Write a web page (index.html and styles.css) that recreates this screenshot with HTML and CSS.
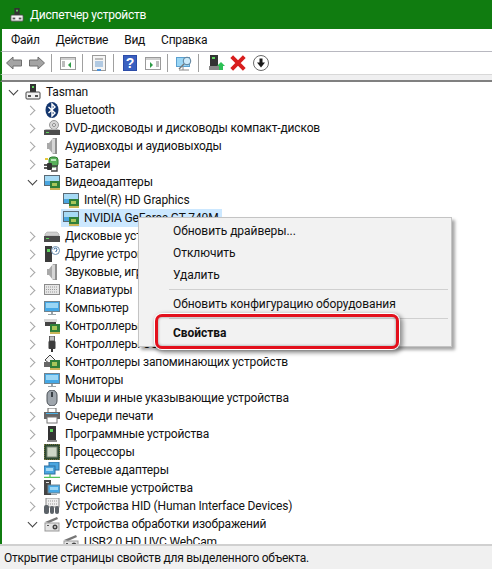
FILE: index.html
```html
<!DOCTYPE html>
<html lang="ru">
<head>
    <meta charset="UTF-8">
    <title>Диспетчер устройств</title>
    <link rel="stylesheet" href="styles.css">
</head>
<body>
    <svg class="defs" width="0" height="0">
        <defs>
            <symbol id="i-device" viewBox="0 0 16 16">
                <rect x="5" y="0" width="6" height="9" fill="#333"/><rect x="7" y="2" width="2" height="2" fill="#5fd35f"/>
                <rect x="1" y="8" width="14" height="7" rx="1" fill="#f2f2f2" stroke="#444"/><rect x="3" y="11" width="3" height="2" fill="#555"/><rect x="10" y="11" width="3" height="2" fill="#555"/>
            </symbol>
            <symbol id="i-bt" viewBox="0 0 16 16">
                <ellipse cx="8" cy="8" rx="6.5" ry="8" fill="#14366e"/>
                <path d="M4.5 5l6.5 6-3 3V2l3 3-6.500 6" fill="none" stroke="#fff" stroke-width="1.400"/>
            </symbol>
            <symbol id="i-dvd" viewBox="0 0 16 16">
                <circle cx="10" cy="5" r="4.500" fill="#d8d8d8" stroke="#999"/><circle cx="10" cy="5" r="1.500" fill="#fff" stroke="#888"/>
                <path d="M0 10l2-1h12l2 1v5H0z" fill="#b5b5b5"/><rect x="0" y="10" width="16" height="5" fill="#4c4c4c"/><rect x="2" y="12" width="3" height="1" fill="#5fd35f"/>
            </symbol>
            <symbol id="i-sound" viewBox="0 0 16 16">
                <path d="M3 5h2l4-5h4v16H9l-4-5H3z" fill="#a9a9a9"/><path d="M8 1h3v14H8z" fill="#d6d6d6"/><path d="M11 0h2v16h-2z" fill="#8f8f8f"/>
            </symbol>
            <symbol id="i-battery" viewBox="0 0 16 16">
                <rect x="5" y="1" width="9" height="10" rx="3" fill="#58b05a" stroke="#2f7a32"/><rect x="7" y="3" width="5" height="2" fill="#bfe8bf"/>
                <path d="M0 9h4M0 12h4" stroke="#222" stroke-width="1.300"/><rect x="3" y="7" width="5" height="7" rx="1" fill="#333"/><path d="M8 10h5v5H7" fill="none" stroke="#444" stroke-width="1.400"/><rect x="1" y="2" width="3" height="2" fill="#e8c93a"/>
            </symbol>
            <symbol id="i-video" viewBox="0 0 16 16">
                <rect x=".5" y="1.500" width="15" height="10" fill="#4aa6e0" stroke="#5a6a75"/><rect x="1" y="2" width="14" height="5" fill="#a6daf5"/>
                <rect x="6" y="7" width="10" height="7" fill="#2f7f3a"/><rect x="8" y="9" width="5" height="3" fill="#a8c65a"/><rect x="6" y="14" width="10" height="2" fill="#c9b458"/>
            </symbol>
            <symbol id="i-disk" viewBox="0 0 16 16">
                <path d="M1 6l2-2h10l2 2v2H1z" fill="#cfcfcf" stroke="#9a9a9a" stroke-width=".500"/><rect x="0" y="8" width="16" height="6" fill="#4a4a4a"/><rect x="2" y="10" width="3" height="1" fill="#5fd35f"/>
            </symbol>
            <symbol id="i-other" viewBox="0 0 16 16">
                <rect x="1" y="0" width="7" height="16" fill="#3a3a3a"/><rect x="3" y="3" width="3" height="3" fill="#5fd35f"/>
                <circle cx="11.500" cy="4.500" r="4" fill="#fff" stroke="#6d8fb0"/><path d="M10 3.500a1.500 1.500 0 1 1 2 1.500v1" fill="none" stroke="#245a94"/>
            </symbol>
            <symbol id="i-keyboard" viewBox="0 0 16 16">
                <rect x=".5" y="2.500" width="15" height="10" fill="#e6e6e6" stroke="#8a8a8a"/>
                <path d="M2 5h12M2 7.500h12M2 10h12" stroke="#9b9b9b" stroke-dasharray="1 1"/>
            </symbol>
            <symbol id="i-monitor" viewBox="0 0 16 16">
                <rect x=".5" y="1.500" width="15" height="10" fill="#45a8e6" stroke="#71848f"/><rect x="2" y="3" width="12" height="5" fill="#9ad6f5"/>
                <path d="M7 12h2v2H7zM4 14h8v1H4z" fill="#9aa3a8"/>
            </symbol>
            <symbol id="i-storage" viewBox="0 0 16 16">
                <rect x="0" y="1" width="13" height="3" fill="#d8d8d8"/><rect x="1" y="4" width="11" height="4" fill="#444"/>
                <rect x="6" y="6" width="10" height="8" fill="#2f7f3a"/><rect x="8" y="8" width="5" height="4" fill="#a8c65a"/><rect x="6" y="14" width="10" height="2" fill="#c9b458"/>
            </symbol>
            <symbol id="i-usb" viewBox="0 0 16 16">
                <rect x="5.500" y="0" width="5" height="5" fill="#bbb" stroke="#444" stroke-width=".800"/><rect x="4.500" y="5" width="7" height="8" rx="1" fill="#3d3d3d"/><rect x="7" y="13" width="2" height="3" fill="#333"/>
            </symbol>
            <symbol id="i-memory" viewBox="0 0 16 16">
                <path d="M1 6l5-5 5 5-5 4z" fill="#f2f2f2" stroke="#444"/><rect x="0" y="8" width="7" height="5" fill="#666"/>
                <rect x="6" y="6" width="10" height="8" fill="#2f7f3a"/><rect x="8" y="8" width="5" height="4" fill="#a8c65a"/><rect x="6" y="14" width="10" height="2" fill="#c9b458"/>
            </symbol>
            <symbol id="i-mouse" viewBox="0 0 16 16">
                <rect x="3" y="0" width="10" height="16" rx="5" fill="#9fa6ad" stroke="#4c5258"/><rect x="7" y="2" width="2" height="5" fill="#3a4046"/>
            </symbol>
            <symbol id="i-printer" viewBox="0 0 16 16">
                <rect x="4" y="0" width="8" height="5" fill="#fff" stroke="#666"/><rect x="0" y="4" width="16" height="7" fill="#666"/><rect x="2" y="5" width="12" height="1" fill="#4db3e8"/>
                <rect x="3" y="9" width="10" height="6" fill="#fff" stroke="#777"/>
            </symbol>
            <symbol id="i-program" viewBox="0 0 16 16">
                <rect x="4" y="0" width="8" height="15" fill="#333"/><rect x="6" y="3" width="3" height="3" fill="#5fd35f"/><rect x="3" y="14" width="10" height="2" fill="#888"/>
            </symbol>
            <symbol id="i-cpu" viewBox="0 0 16 16">
                <rect x="0" y="0" width="16" height="16" fill="#2e4a32" stroke="#b89a4a" stroke-dasharray="1 1"/><rect x="3" y="3" width="10" height="10" fill="#cfd8c8" stroke="#7c8a78"/>
            </symbol>
            <symbol id="i-net" viewBox="0 0 16 16">
                <rect x="5" y="0" width="10" height="8" fill="#4aa6e0" stroke="#2f6f9f"/><rect x="0" y="4" width="11" height="8" fill="#4aa6e0" stroke="#2f6f9f"/><rect x="2" y="6" width="7" height="3" fill="#a6daf5"/>
                <path d="M6 12v3M0 15.500h16" stroke="#56c25a" stroke-width="1.300"/>
            </symbol>
            <symbol id="i-system" viewBox="0 0 16 16">
                <rect x="0" y="0" width="7" height="15" fill="#444"/><rect x="2" y="2" width="3" height="1" fill="#ddd"/>
                <rect x="4" y="5" width="12" height="8" fill="#45a8e6" stroke="#71848f"/><rect x="6" y="7" width="8" height="3" fill="#9ad6f5"/><rect x="7" y="14" width="6" height="1" fill="#9aa3a8"/>
            </symbol>
            <symbol id="i-hid" viewBox="0 0 16 16">
                <rect x="2" y="0" width="13" height="9" fill="#eee" stroke="#8a8a8a"/><path d="M4 3h9M4 6h9" stroke="#999" stroke-dasharray="1 1"/>
                <rect x="0" y="7" width="5" height="9" rx="2" fill="#5c6268"/><rect x="6" y="8" width="4" height="8" rx="2" fill="#5c6268"/><rect x="11" y="8" width="4" height="8" rx="2" fill="#5c6268"/>
            </symbol>
            <symbol id="i-camera" viewBox="0 0 16 16">
                <path d="M1 6L13 1l1 2-9 4z" fill="#777"/><rect x="1" y="7" width="14" height="8" fill="#e4e4e4" stroke="#999"/><circle cx="11" cy="11" r="2.500" fill="#444"/><circle cx="11" cy="11" r="1" fill="#ddd"/><rect x="3" y="9" width="2" height="1" fill="#555"/>
            </symbol>
        </defs>
    </svg>

    <div class="window">
        <header class="titlebar">
            <svg class="title-icon"><use href="#i-device"/></svg>
            <span>Диспетчер устройств</span>
        </header>

        <nav class="menubar">
            <span>Файл</span>
            <span>Действие</span>
            <span>Вид</span>
            <span>Справка</span>
        </nav>

        <div class="toolbar">
            <button class="tool">
                <svg viewBox="0 0 16 14"><path d="M.5 7L7 1v3h8.500v6H7v3z" fill="#a4a4a4" stroke="#6f6f6f"/></svg>
            </button>
            <button class="tool">
                <svg viewBox="0 0 16 14"><path d="M15.500 7L9 1v3H.5v6H9v3z" fill="#a4a4a4" stroke="#6f6f6f"/></svg>
            </button>
            <i class="tool-sep"></i>
            <button class="tool">
                <svg viewBox="0 0 16 14"><rect x=".5" y="1.500" width="15" height="12" fill="#fff" stroke="#9a9a9a"/><rect x="1" y="2" width="14" height="2" fill="#cfcfcf"/><path d="M2 6h3M2 8h3M2 10h3" stroke="#7a7a7a"/><path d="M11 6v6L8 9z" fill="#2e9b46"/></svg>
            </button>
            <i class="tool-sep"></i>
            <button class="tool">
                <svg viewBox="0 0 16 16"><rect x="1.500" y=".5" width="13" height="15" fill="#f4f4f4" stroke="#9a9a9a"/><rect x="4" y="3" width="8" height="2" fill="#bcbcbc"/><path d="M4 7h8M4 9h8M4 11h8" stroke="#6f9fd0"/><rect x="6" y="14" width="4" height="2" fill="#4a90d9"/></svg>
            </button>
            <i class="tool-sep"></i>
            <button class="tool">
                <svg viewBox="0 0 14 16"><rect width="14" height="16" fill="#2c4ca8"/><rect x="1" y="1" width="12" height="14" fill="#3a60c0"/><text class="help-mark" x="7" y="13">?</text></svg>
            </button>
            <button class="tool">
                <svg viewBox="0 0 16 14"><rect x=".5" y="1.500" width="15" height="12" fill="#fff" stroke="#9a9a9a"/><rect x="1" y="2" width="14" height="2" fill="#cfcfcf"/><path d="M11 6h3M11 8h3M11 10h3" stroke="#7a7a7a"/><path d="M5 6v6l3-3z" fill="#2e9b46"/></svg>
            </button>
            <i class="tool-sep"></i>
            <button class="tool">
                <svg viewBox="0 0 16 16"><rect x=".5" y="2.500" width="13" height="9" fill="#9ad6f5" stroke="#5aa0d0"/><path d="M3 15h10M7 12v3" stroke="#888"/><circle cx="11" cy="6" r="3.800" fill="#cdeafa" stroke="#5a7d98"/><path d="M8 9l-5 5" stroke="#777" stroke-width="1.400"/></svg>
            </button>
            <i class="tool-sep"></i>
            <button class="tool tool-wide">
                <svg viewBox="0 0 16 16"><rect x="1" y="0" width="8" height="11" fill="#333"/><rect x="3" y="2" width="3" height="2" fill="#5fd35f"/><rect x="0" y="11" width="10" height="4" fill="#888"/><path d="M12 7l4 4h-2v4h-4v-4H8z" fill="#2dc055"/></svg>
            </button>
            <button class="tool tool-tight">
                <svg viewBox="0 0 14 14"><path d="M1.500 1.500l11 11M12.500 1.500l-11 11" stroke="#d81e1e" stroke-width="3.400"/></svg>
            </button>
            <button class="tool">
                <svg viewBox="0 0 16 16"><circle cx="8" cy="8" r="7.500" fill="#fff" stroke="#6a6a6a"/><path d="M6.500 3.500h3v4H12l-4 5-4-5h2.500z" fill="#1a1a1a"/></svg>
            </button>
        </div>
        <div class="toolbar-strip"></div>

        <ul class="tree">
            <li class="row"><span class="chev open"></span><svg class="icon"><use href="#i-device"/></svg><span>Tasman</span></li>
            <li class="row lvl1"><span class="chev"></span><svg class="icon"><use href="#i-bt"/></svg><span>Bluetooth</span></li>
            <li class="row lvl1"><span class="chev"></span><svg class="icon"><use href="#i-dvd"/></svg><span>DVD-дисководы и дисководы компакт-дисков</span></li>
            <li class="row lvl1"><span class="chev"></span><svg class="icon"><use href="#i-sound"/></svg><span>Аудиовходы и аудиовыходы</span></li>
            <li class="row lvl1"><span class="chev"></span><svg class="icon"><use href="#i-battery"/></svg><span>Батареи</span></li>
            <li class="row lvl1"><span class="chev open"></span><svg class="icon"><use href="#i-video"/></svg><span>Видеоадаптеры</span></li>
            <li class="row lvl2"><span class="chev none"></span><svg class="icon"><use href="#i-video"/></svg><span>Intel(R) HD Graphics</span></li>
            <li class="row lvl2 selected"><span class="chev none"></span><span class="sel-box"><svg class="icon"><use href="#i-video"/></svg><span>NVIDIA GeForce GT 740M</span></span></li>
            <li class="row lvl1"><span class="chev"></span><svg class="icon"><use href="#i-disk"/></svg><span>Дисковые устройства</span></li>
            <li class="row lvl1"><span class="chev"></span><svg class="icon"><use href="#i-other"/></svg><span>Другие устройства</span></li>
            <li class="row lvl1"><span class="chev"></span><svg class="icon"><use href="#i-sound"/></svg><span>Звуковые, игровые и видеоустройства</span></li>
            <li class="row lvl1"><span class="chev"></span><svg class="icon"><use href="#i-keyboard"/></svg><span>Клавиатуры</span></li>
            <li class="row lvl1"><span class="chev"></span><svg class="icon"><use href="#i-monitor"/></svg><span>Компьютер</span></li>
            <li class="row lvl1"><span class="chev"></span><svg class="icon"><use href="#i-storage"/></svg><span>Контроллеры IDE ATA/ATAPI</span></li>
            <li class="row lvl1"><span class="chev"></span><svg class="icon"><use href="#i-usb"/></svg><span>Контроллеры USB</span></li>
            <li class="row lvl1"><span class="chev"></span><svg class="icon"><use href="#i-memory"/></svg><span>Контроллеры запоминающих устройств</span></li>
            <li class="row lvl1"><span class="chev"></span><svg class="icon"><use href="#i-monitor"/></svg><span>Мониторы</span></li>
            <li class="row lvl1"><span class="chev"></span><svg class="icon"><use href="#i-mouse"/></svg><span>Мыши и иные указывающие устройства</span></li>
            <li class="row lvl1"><span class="chev"></span><svg class="icon"><use href="#i-printer"/></svg><span>Очереди печати</span></li>
            <li class="row lvl1"><span class="chev"></span><svg class="icon"><use href="#i-program"/></svg><span>Программные устройства</span></li>
            <li class="row lvl1"><span class="chev"></span><svg class="icon"><use href="#i-cpu"/></svg><span>Процессоры</span></li>
            <li class="row lvl1"><span class="chev"></span><svg class="icon"><use href="#i-net"/></svg><span>Сетевые адаптеры</span></li>
            <li class="row lvl1"><span class="chev"></span><svg class="icon"><use href="#i-system"/></svg><span>Системные устройства</span></li>
            <li class="row lvl1"><span class="chev"></span><svg class="icon"><use href="#i-hid"/></svg><span>Устройства HID (Human Interface Devices)</span></li>
            <li class="row lvl1"><span class="chev open"></span><svg class="icon"><use href="#i-camera"/></svg><span>Устройства обработки изображений</span></li>
            <li class="row lvl2"><span class="chev none"></span><svg class="icon"><use href="#i-camera"/></svg><span>USB2.0 HD UVC WebCam</span></li>
        </ul>

        <footer class="statusbar">Открытие страницы свойств для выделенного объекта.</footer>
    </div>

    <!-- контекстное меню -->
    <div class="context-menu">
        <div class="menu-item">Обновить драйверы...</div>
        <div class="menu-item">Отключить</div>
        <div class="menu-item">Удалить</div>
        <div class="menu-sep"></div>
        <div class="menu-item">Обновить конфигурацию оборудования</div>
        <div class="menu-sep"></div>
        <div class="menu-item bold">Свойства</div>
        <div class="red-frame"></div>
    </div>
</body>
</html>
```

FILE: styles.css
```css
* {
    box-sizing: border-box;
}

html, body {
    height: 100%;
}

body {
    margin: 0;
    font-family: Roboto, "Open Sans", sans-serif;
    font-size: 12px;
    color: #111;
    background-color: #fff;
    overflow: hidden;
}

.defs {
    position: absolute;
}

.window {
    display: flex;
    flex-direction: column;
    height: 100%;
}

.titlebar {
    display: flex;
    align-items: center;
    flex: 0 0 29px;
    padding-left: 10px;
    background-color: #107c10;
    color: #fff;
    letter-spacing: -0.25px;
}

.title-icon {
    width: 14px;
    height: 14px;
    margin-right: 6px;
}

.menubar {
    display: flex;
    align-items: center;
    gap: 16px;
    flex: 0 0 23px;
    padding-left: 9px;
    border-bottom: 1px solid #b8b8c0;
    border-left: 2px solid #107c10;
    letter-spacing: -0.25px;
}

.toolbar {
    display: flex;
    align-items: center;
    flex: 0 0 22px;
    padding-left: 1px;
    border-left: 2px solid #107c10;
}

.tool {
    display: flex;
    align-items: center;
    justify-content: center;
    width: 22px;
    height: 20px;
    padding: 0;
    border: none;
    background: none;
}

.tool + .tool {
    margin-left: 1px;
}

.tool svg {
    width: 16px;
    height: 16px;
}

.tool-sep {
    width: 1px;
    height: 18px;
    margin: 0 5px 0 3px;
    background-color: #a0a0a0;
}

.tool-wide {
    margin-left: 2px;
}

.tool + .tool-tight {
    margin-left: -1px;
}

.help-mark {
    font-family: "Liberation Sans", sans-serif;
    font-size: 14px;
    font-weight: bold;
    fill: #fff;
    text-anchor: middle;
}

.toolbar-strip {
    flex: 0 0 8px;
    background-color: #efeff0;
    border-top: 1px solid #d8d8d8;
    border-bottom: 2px solid #808080;
    border-left: 2px solid #107c10;
}

.tree {
    flex: 1;
    margin: 0;
    padding: 1px 0 0;
    list-style: none;
    overflow: hidden;
    border-left: 2px solid #107c10;
    letter-spacing: -0.15px;
}

.row {
    display: flex;
    align-items: center;
    height: 18px;
    padding-left: 3px;
    white-space: nowrap;
}

.lvl1 {
    padding-left: 22px;
}

.lvl2 {
    padding-left: 41px;
}

.chev {
    display: flex;
    align-items: center;
    justify-content: center;
    width: 16px;
    height: 16px;
    flex: none;
}

.chev::before {
    content: "";
    width: 6px;
    height: 6px;
    margin-right: 3px;
    border-top: 1.5px solid #a6a6a6;
    border-right: 1.5px solid #a6a6a6;
    transform: rotate(45deg);
}

.chev.open::before {
    margin: 0 0 3px 0;
    border-color: #404040;
    transform: rotate(135deg);
}

.chev.none::before {
    display: none;
}

.icon {
    width: 16px;
    height: 16px;
    margin: 0 5px 0 4px;
    flex: none;
}

.sel-box {
    display: flex;
    align-items: center;
    height: 18px;
    width: 161px;
    margin-left: 2px;
    background-color: #cce8ff;
}

.sel-box .icon {
    margin: 0 5px 0 2px;
}

.statusbar {
    display: flex;
    align-items: center;
    flex: 0 0 25px;
    padding-left: 4px;
    background-color: #f0f0f0;
    border-top: 2px solid #d0d0d0;
    letter-spacing: -0.25px;
}

.context-menu {
    position: absolute;
    left: 138px;
    top: 217px;
    width: 314px;
    padding: 2px 3px;
    background-color: #f2f2f2;
    border: 1px solid #c4c4c4;
    box-shadow: 3px 3px 3px rgba(0, 0, 0, 0.35);
    letter-spacing: -0.05px;
}

.menu-item {
    display: flex;
    align-items: center;
    height: 22px;
    padding-left: 31px;
}

.bold {
    font-weight: bold;
}

.menu-sep {
    height: 1px;
    margin: 3px 0 3px 27px;
    background-color: #d0d0d0;
}

.red-frame {
    position: absolute;
    left: 16px;
    top: 96px;
    width: 244px;
    height: 35px;
    border: 3px solid #e3101c;
    border-radius: 7px;
    box-shadow: 0 0 0 1px #fff, 2px 2px 4px 2px rgba(0, 0, 0, 0.4), inset 0 0 3px rgba(0, 0, 0, 0.4);
}
```
